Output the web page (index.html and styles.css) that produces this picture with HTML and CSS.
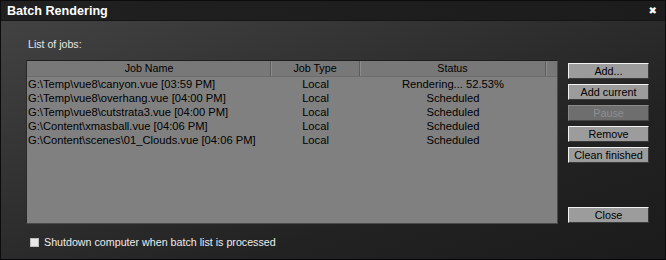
FILE: index.html
```html
<!DOCTYPE html>
<html lang="en">
<head>
  <meta charset="UTF-8" />
  <title>Batch Rendering</title>
  <link rel="stylesheet" href="styles.css">
</head>
<body>
  <div class="window">
    <div class="titlebar">
      <span class="title">Batch Rendering</span>
      <span class="close-x">&#x2716;</span>
    </div>

    <div class="content">
      <div class="list-label">List of jobs:</div>

      <div class="main">
        <div class="joblist">
          <div class="row header">
            <span class="col name">Job Name</span>
            <span class="col type">Job Type</span>
            <span class="col status">Status</span>
            <span class="col filler"></span>
          </div>
          <div class="row">
            <span class="col name">G:\Temp\vue8\canyon.vue [03:59 PM]</span>
            <span class="col type">Local</span>
            <span class="col status">Rendering... 52.53%</span>
          </div>
          <div class="row">
            <span class="col name">G:\Temp\vue8\overhang.vue [04:00 PM]</span>
            <span class="col type">Local</span>
            <span class="col status">Scheduled</span>
          </div>
          <div class="row">
            <span class="col name">G:\Temp\vue8\cutstrata3.vue [04:00 PM]</span>
            <span class="col type">Local</span>
            <span class="col status">Scheduled</span>
          </div>
          <div class="row">
            <span class="col name">G:\Content\xmasball.vue [04:06 PM]</span>
            <span class="col type">Local</span>
            <span class="col status">Scheduled</span>
          </div>
          <div class="row">
            <span class="col name">G:\Content\scenes\01_Clouds.vue [04:06 PM]</span>
            <span class="col type">Local</span>
            <span class="col status">Scheduled</span>
          </div>
        </div>

        <div class="buttons">
          <button class="btn">Add...</button>
          <button class="btn">Add current</button>
          <button class="btn" disabled>Pause</button>
          <button class="btn">Remove</button>
          <button class="btn">Clean finished</button>
          <button class="btn btn-close">Close</button>
        </div>
      </div>

      <label class="shutdown">
        <span class="checkbox"></span>
        Shutdown computer when batch list is processed
      </label>
    </div>
  </div>
</body>
</html>
```

FILE: styles.css
```css
body {
  margin: 0;
  padding: 0;
  background: #000;
  font-family: "Liberation Sans", Arial, sans-serif;
  font-size: 11px;
}

.window {
  width: 666px;
  height: 260px;
  box-sizing: border-box;
  border: 1px solid #0c0c0c;
  border-bottom-color: #05050a;
  background: linear-gradient(160deg, #444 0%, #333 35%, #222 70%, #1b1b1b 100%);
  display: flex;
  flex-direction: column;
}

.titlebar {
  height: 19px;
  display: flex;
  align-items: center;
  justify-content: space-between;
  padding: 0 8px 0 6px;
  background: linear-gradient(90deg, #202020, #1c1c1c);
  border-bottom: 1px solid #151515;
}

.title {
  color: #fff;
  font-weight: bold;
  font-size: 12.6px;
}

.close-x {
  color: #fff;
  font-size: 10px;
  font-family: "DejaVu Sans", sans-serif;
}

.content {
  flex-grow: 1;
  display: flex;
  flex-direction: column;
  padding: 0 16px 0 25px;
}

.list-label {
  color: #e6e6e6;
  font-size: 10.6px;
  padding: 17px 0 0 2px;
  height: 22px;
}

.main {
  display: flex;
  gap: 10px;
}

.joblist {
  width: 530px;
  height: 162px;
  background: #808080;
  border: 1px solid #4a4a4a;
  border-top-color: #1e1e1e;
  border-left-color: #2a2a2a;
}

.row {
  display: grid;
  grid-template-columns: 244px 89px 186px 1fr;
  height: 14px;
  line-height: 14px;
  color: #000;
  font-size: 11.2px;
}

.row.header {
  height: 15px;
  line-height: 15px;
  font-size: 10.7px;
  background: #787878;
  border-bottom: 1px solid #6c6c6c;
}

.row.header .col {
  text-align: center;
  border-right: 1px solid #5c5c5c;
  box-shadow: 1px 0 0 #8c8c8c;
}

.row.header .filler {
  border-right: none;
  box-shadow: none;
}

.col {
  white-space: nowrap;
  overflow: hidden;
}

.name {
  padding-left: 1px;
}

.type,
.status {
  text-align: center;
}

.buttons {
  display: flex;
  flex-direction: column;
  gap: 5px;
  padding-top: 3px;
  width: 81px;
}

.btn {
  height: 16px;
  padding: 0;
  margin: 0;
  font-family: inherit;
  font-size: 10.8px;
  color: #000;
  background: #9c9c9c;
  border: 1px solid;
  border-color: #f2f2f2 #3a3a3a #3a3a3a #f2f2f2;
}

.btn:disabled {
  background: #6e6e6e;
  color: #8e8e8e;
  border-color: #8a8a8a #444 #444 #8a8a8a;
}

.btn-close {
  margin-top: auto;
  margin-bottom: 1px;
}

.shutdown {
  display: flex;
  align-items: center;
  gap: 5px;
  margin-top: 12px;
  padding-left: 4px;
  color: #ececec;
  font-size: 10.7px;
}

.checkbox {
  width: 7px;
  height: 7px;
  background: #e8e8e8;
  border: 1px solid #bdbdbd;
}
```
